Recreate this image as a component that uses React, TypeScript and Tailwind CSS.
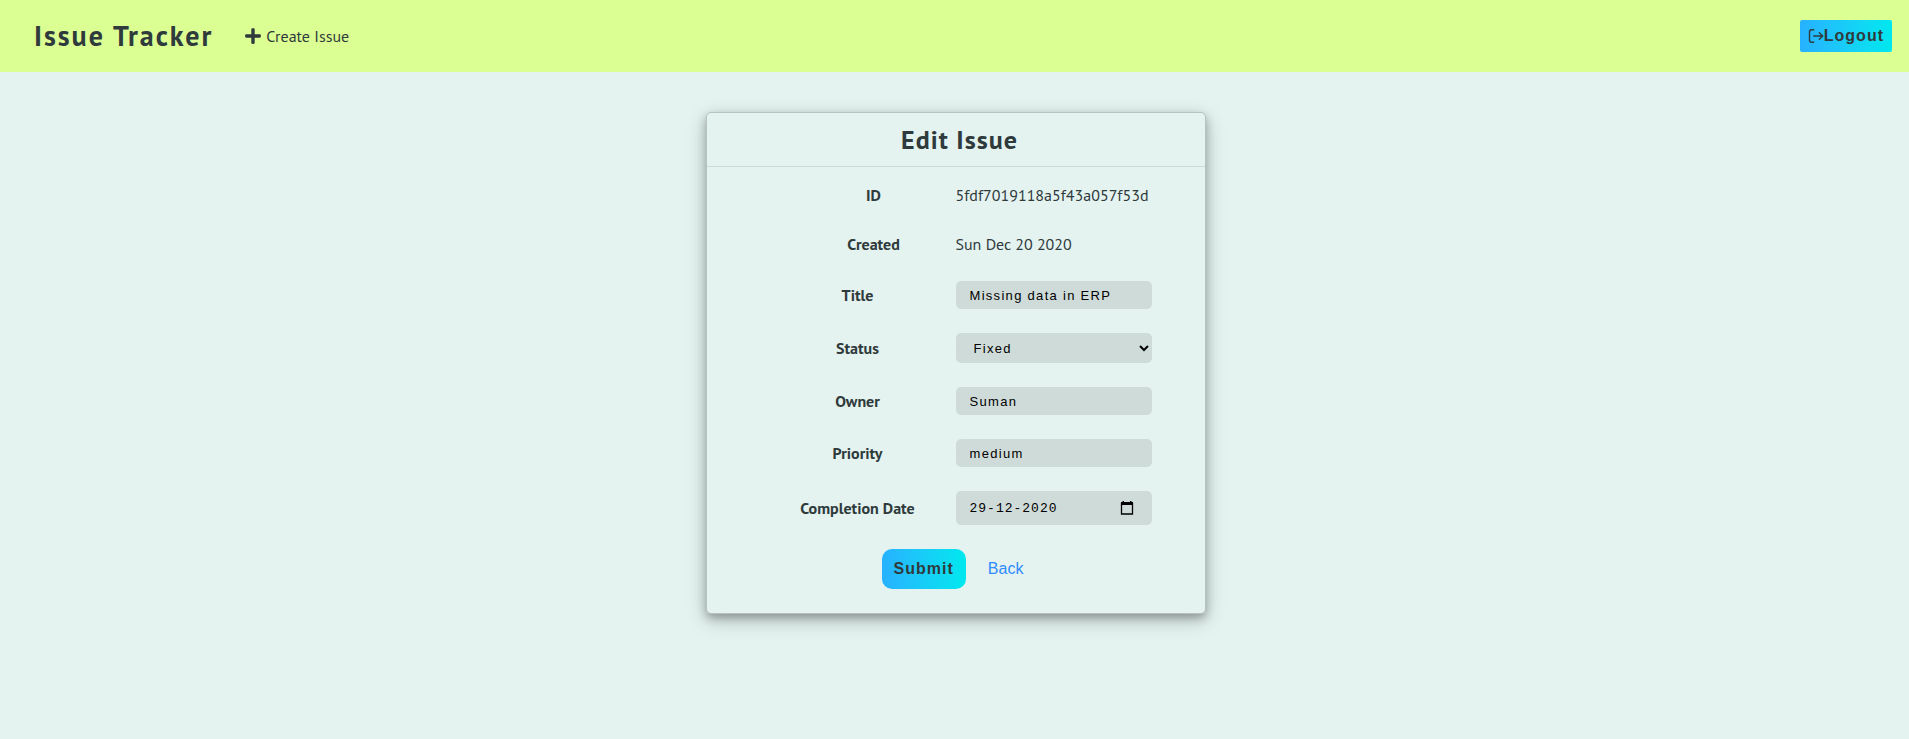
import { useState } from "react";
import type { InputHTMLAttributes } from "react";
import { FaPlus } from "react-icons/fa";

const labelClass = "text-center font-bold leading-6";
const fieldClass =
  "w-full rounded-[5px] bg-[#cfdbd8] px-3.5 text-[13px] tracking-widest text-black outline-none font-['Liberation_Sans',Arial,sans-serif]";

function LogoutIcon() {
  return (
    <svg viewBox="0 0 16 16" className="size-4" fill="none" stroke="currentColor" strokeWidth="1.4" aria-hidden="true">
      <path d="M6.200 1.700H3.700Q1.500 1.700 1.500 3.900v8.200q0 2.200 2.200 2.200h2.500" />
      <path d="M5.200 8h9.300M10.900 4.200 14.700 8l-3.800 3.800" />
    </svg>
  );
}

function CalendarIcon() {
  return (
    <svg viewBox="0 0 16 16" className="size-4" aria-hidden="true">
      <path d="M2.500 3.500h11v10.500h-11z" fill="none" stroke="currentColor" strokeWidth="1.300" />
      <path d="M2 2h12v3H2zM3.500 1h1.500v2H3.500zM11 1h1.500v2H11z" fill="currentColor" />
    </svg>
  );
}

function TextField({ id, label, ...rest }: { id: string; label: string } & InputHTMLAttributes<HTMLInputElement>) {
  return (
    <div className="grid grid-cols-2 items-center">
      <label htmlFor={id} className={labelClass}>{label}</label>
      <input id={id} className={`h-7 ${fieldClass}`} {...rest} />
    </div>
  );
}

function StaticRow({ label, value }: { label: string; value: string }) {
  return (
    <div className="grid grid-cols-2 items-center">
      <dt className="pl-8 text-center font-bold leading-[25px]">{label}</dt>
      <dd className="whitespace-nowrap leading-[25px]">{value}</dd>
    </div>
  );
}

export default function App() {
  const [status, setStatus] = useState("Fixed");
  return (
    <div className="min-h-screen bg-[#e4f3f0] font-['PT_Sans',Lato,sans-serif] text-base text-[#2f3a3c]">
      <header className="flex h-18 items-center bg-[#dcff93] pl-[34px] pr-[17px]">
        <h1 className="text-[28px] font-bold tracking-[2px]">Issue Tracker</h1>
        <a href="#create" className="ml-[31px] flex items-center gap-1">
          <FaPlus className="size-[18px]" />
          Create Issue
        </a>
        <button
          type="button"
          className="ml-auto flex h-8 items-center rounded-[2px] bg-linear-to-r from-[#27b1ff] to-[#00e8ee] px-2 font-['Liberation_Sans',Arial,sans-serif] text-base font-bold tracking-[1px]"
        >
          <LogoutIcon />
          Logout
        </button>
      </header>
      <main className="flex justify-center py-10 pl-[22px] pr-5">
        <section className="w-full max-w-[500px] rounded-[5px] border border-black/20 pb-6 shadow-[0_4px_8px_rgba(0,0,0,0.25),0_6px_20px_rgba(0,0,0,0.22)]">
          <h2 className="border-b border-black/10 py-2 pl-2 text-center text-[26px] leading-[37px] font-bold tracking-[1px]">Edit Issue</h2>
          <form className="mx-auto flex max-w-[392px] flex-col gap-6 pt-4" onSubmit={(e) => e.preventDefault()}>
            <dl className="flex flex-col gap-6">
              <StaticRow label="ID" value="5fdf7019118a5f43a057f53d" />
              <StaticRow label="Created" value="Sun Dec 20 2020" />
            </dl>
            <TextField id="title" label="Title" defaultValue="Missing data in ERP" />
            <div className="grid grid-cols-2 items-center">
              <label htmlFor="status" className={labelClass}>Status</label>
              <select id="status" value={status} onChange={(e) => setStatus(e.target.value)} className={`h-[30px] ${fieldClass}`}>
                <option>New</option>
                <option>Assigned</option>
                <option>Fixed</option>
                <option>Closed</option>
              </select>
            </div>
            <TextField id="owner" label="Owner" defaultValue="Suman" />
            <TextField id="priority" label="Priority" defaultValue="medium" />
            <div className="grid grid-cols-2 items-center">
              <label htmlFor="completion" className={labelClass}>Completion Date</label>
              <div className="flex h-[34px] items-center rounded-[5px] bg-[#cfdbd8] pl-3.5 pr-[17px]">
                <input
                  id="completion"
                  defaultValue="29-12-2020"
                  className="h-full w-full min-w-0 bg-transparent font-['Liberation_Mono',monospace] text-[13px] tracking-[1px] text-black outline-none"
                />
                <button type="button" aria-label="Choose date" className="text-black">
                  <CalendarIcon />
                </button>
              </div>
            </div>
            <div className="flex items-center justify-center gap-[22px] pr-1.5 font-['Liberation_Sans',Arial,sans-serif] text-base">
              <button
                type="submit"
                className="h-10 rounded-[10px] bg-linear-to-r from-[#27b1ff] to-[#00e8ee] px-3 font-bold tracking-[1px]"
              >
                Submit
              </button>
              <a href="#back" className="text-[#2f8bff]">Back</a>
            </div>
          </form>
        </section>
      </main>
    </div>
  );
}
